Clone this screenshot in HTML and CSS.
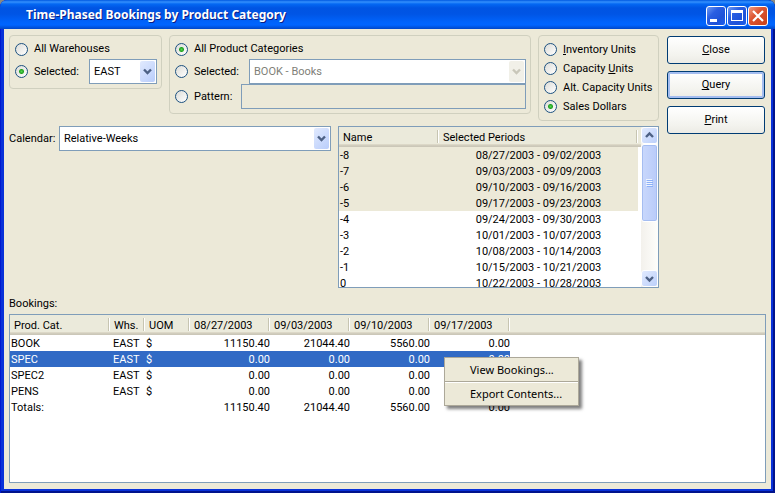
FILE: index.html
```html
<!DOCTYPE html>
<html lang="en">
<head>
<meta charset="utf-8">
<title>Time-Phased Bookings by Product Category</title>
<link rel="stylesheet" href="styles.css">
</head>
<body>
<div class="window">
  <header class="titlebar">
    <h1>Time-Phased Bookings by Product Category</h1>
    <div class="window-controls">
      <button type="button" class="control" aria-label="Minimize"><svg viewBox="0 0 18 18"><path d="M3 12h7v3H3z" fill="#fff"/></svg></button>
      <button type="button" class="control" aria-label="Maximize"><svg viewBox="0 0 18 18"><path d="M3 3h12v11H3zM4 6v7h10V6z" fill="#fff" fill-rule="evenodd"/></svg></button>
      <button type="button" class="control control-close" aria-label="Close window"><svg viewBox="0 0 18 18"><path d="M4 4l10 10M14 4L4 14" stroke="#fff" stroke-width="2.2" fill="none"/></svg></button>
    </div>
  </header>

  <main class="content">
    <div class="top">
      <div class="filters">
        <div class="groups">
          <fieldset class="group group-warehouse">
            <label class="option"><input type="radio" name="whs">All Warehouses</label>
            <div class="line">
              <label class="option option-fixed"><input type="radio" name="whs" checked>Selected:</label>
              <span class="combo"><select aria-label="Warehouse"><option>EAST</option></select><svg class="arrow" viewBox="0 0 15 21"><path d="M4 8.500l3.500 3.500L11 8.500" fill="none" stroke="#4d6185" stroke-width="2.400"/></svg></span>
            </div>
          </fieldset>
          <fieldset class="group group-category">
            <label class="option"><input type="radio" name="cat" checked>All Product Categories</label>
            <div class="line">
              <label class="option option-fixed"><input type="radio" name="cat">Selected:</label>
              <span class="combo combo-disabled"><select aria-label="Product category" disabled><option>BOOK - Books</option></select><svg class="arrow" viewBox="0 0 15 21"><path d="M4 8.500l3.500 3.500L11 8.500" fill="none" stroke="#c9c7ba" stroke-width="2.400"/></svg></span>
            </div>
            <div class="line">
              <label class="option option-pattern"><input type="radio" name="cat">Pattern:</label>
              <input class="pattern" type="text" aria-label="Pattern" disabled>
            </div>
          </fieldset>
          <fieldset class="group group-units">
            <label class="option"><input type="radio" name="unit"><span><u>I</u>nventory Units</span></label>
            <label class="option"><input type="radio" name="unit"><span>Capacity <u>U</u>nits</span></label>
            <label class="option"><input type="radio" name="unit">Alt. Capacity Units</label>
            <label class="option"><input type="radio" name="unit" checked>Sales Dollars</label>
          </fieldset>
        </div>
        <div class="calendar">
          <div class="calendar-field">
            <label for="calendar">Calendar:</label>
            <span class="combo"><select id="calendar"><option>Relative-Weeks</option></select><svg class="arrow" viewBox="0 0 15 21"><path d="M4 8.500l3.500 3.500L11 8.500" fill="none" stroke="#4d6185" stroke-width="2.400"/></svg></span>
          </div>
          <div class="list periods">
            <div class="periods-view">
              <table>
                <colgroup><col class="col-name"><col class="col-period"><col></colgroup>
                <thead><tr><th>Name</th><th>Selected Periods</th><th class="filler"></th></tr></thead>
                <tbody>
                  <tr class="picked"><td>-8</td><td>08/27/2003 - 09/02/2003</td></tr>
                  <tr class="picked"><td>-7</td><td>09/03/2003 - 09/09/2003</td></tr>
                  <tr class="picked"><td>-6</td><td>09/10/2003 - 09/16/2003</td></tr>
                  <tr class="picked"><td>-5</td><td>09/17/2003 - 09/23/2003</td></tr>
                  <tr><td>-4</td><td>09/24/2003 - 09/30/2003</td></tr>
                  <tr><td>-3</td><td>10/01/2003 - 10/07/2003</td></tr>
                  <tr><td>-2</td><td>10/08/2003 - 10/14/2003</td></tr>
                  <tr><td>-1</td><td>10/15/2003 - 10/21/2003</td></tr>
                  <tr><td>0</td><td>10/22/2003 - 10/28/2003</td></tr>
                </tbody>
              </table>
            </div>
            <div class="scrollbar">
              <button type="button" class="scroll-button" aria-label="Scroll up"><svg viewBox="0 0 15 15"><path d="M4 9l3.500-3.500L11 9" fill="none" stroke="#4d6185" stroke-width="2.400"/></svg></button>
              <div class="thumb"><svg viewBox="0 0 7 8"><path d="M0 .5h6M0 2.500h6M0 4.500h6M0 6.500h6" stroke="#eef4fe"/><path d="M1 1.500h6M1 3.500h6M1 5.500h6M1 7.500h6" stroke="#8cb0f8"/></svg></div>
              <button type="button" class="scroll-button scroll-down" aria-label="Scroll down"><svg viewBox="0 0 15 15"><path d="M4 6l3.500 3.500L11 6" fill="none" stroke="#4d6185" stroke-width="2.400"/></svg></button>
            </div>
          </div>
        </div>
      </div>
      <div class="actions">
        <button type="button" class="action"><u>C</u>lose</button>
        <button type="button" class="action action-default"><u>Q</u>uery</button>
        <button type="button" class="action"><u>P</u>rint</button>
      </div>
    </div>

    <h2>Bookings:</h2>
    <div class="list bookings">
      <table>
        <colgroup><col class="col-cat"><col class="col-whs"><col class="col-uom"><col class="col-date"><col class="col-date"><col class="col-date"><col class="col-date"><col></colgroup>
        <thead><tr><th>Prod. Cat.</th><th>Whs.</th><th>UOM</th><th>08/27/2003</th><th>09/03/2003</th><th>09/10/2003</th><th>09/17/2003</th><th class="filler"></th></tr></thead>
        <tbody>
          <tr><td>BOOK</td><td>EAST</td><td>$</td><td>11150.40</td><td>21044.40</td><td>5560.00</td><td>0.00</td></tr>
          <tr class="current"><td>SPEC</td><td>EAST</td><td>$</td><td>0.00</td><td>0.00</td><td>0.00</td><td>0.00</td></tr>
          <tr><td>SPEC2</td><td>EAST</td><td>$</td><td>0.00</td><td>0.00</td><td>0.00</td><td>0.00</td></tr>
          <tr><td>PENS</td><td>EAST</td><td>$</td><td>0.00</td><td>0.00</td><td>0.00</td><td>0.00</td></tr>
          <tr><td>Totals:</td><td></td><td></td><td>11150.40</td><td>21044.40</td><td>5560.00</td><td>0.00</td></tr>
        </tbody>
      </table>
      <div class="menu" role="menu">
        <button type="button" role="menuitem">View Bookings...</button>
        <button type="button" role="menuitem">Export Contents...</button>
      </div>
    </div>
  </main>
</div>
</body>
</html>
```
FILE: styles.css
```css
* { box-sizing: border-box; }

body {
  margin: 0;
  background: #8a8a80;
  color: #000;
  font: 11px/16px Roboto, "Liberation Sans", sans-serif;
}

button, input, select { font: inherit; color: inherit; margin: 0; }
svg { display: block; }
u { text-underline-offset: 1px; }

.window {
  display: flex;
  flex-direction: column;
  min-height: 100vh;
  background: #0831d9;
  border-radius: 7px 7px 0 0;
  overflow: hidden;
  box-shadow: inset 1px 0 #0019cf, inset -2px 0 #00138c, inset 0 -2px #00138c;
}

.titlebar {
  display: flex;
  align-items: center;
  justify-content: space-between;
  height: 29px;
  padding: 2px 7px 0 26px;
  background: linear-gradient(#0058e0, #3490fd 2px, #0468f3 4px, #0054e3 8px, #0055e5 14px, #0063fb 22px, #0065ff 25px, #0047c8 29px);
}

h1 {
  margin: 0;
  padding-bottom: 1px;
  color: #fff;
  font: bold 12px/18px "Noto Sans", sans-serif;
  text-shadow: 1px 1px #0a1e84;
  white-space: nowrap;
}

.window-controls { display: flex; gap: 1px; }

.control {
  width: 20px;
  height: 20px;
  padding: 0;
  border: 1px solid #fff;
  border-radius: 3px;
  background: linear-gradient(135deg, #6f9bf3, #2a5ee2 35%, #1f52d8 70%, #1b60f0);
}

.control-close { background: linear-gradient(135deg, #f09a82, #dd5531 40%, #c9401a); }

.content {
  flex: 1;
  display: flex;
  flex-direction: column;
  margin: 0 4px 4px;
  padding: 6px 5px;
  background: #ece9d8;
}

.top { display: flex; gap: 8px; padding-right: 1px; }
.filters { flex: 1; display: flex; flex-direction: column; gap: 5px; }
.groups { display: flex; align-items: flex-start; gap: 7px; }

.group {
  min-width: 0;
  margin: 0;
  padding: 5px 4px 4px 5px;
  border: 1px solid #d0d0bf;
  border-radius: 4px;
}

.group > .option:first-child { margin-bottom: 2px; }
.group-warehouse { flex: 0 0 153px; }
.group-category { flex: 1; }
.group-units { flex: 0 0 121px; padding: 4px 5px; }

.option { display: flex; align-items: center; gap: 6px; height: 16px; white-space: nowrap; }
.group-units .option,
.group-units .option:first-child { height: 19px; margin: 0; }
.option-fixed { flex: 0 0 74px; }
.option-pattern { flex: 0 0 66px; }
.line { display: flex; align-items: center; height: 25px; }

input[type="radio"] {
  appearance: none;
  flex: none;
  width: 13px;
  height: 13px;
  border: 1px solid #1c5180;
  border-radius: 50%;
  background: linear-gradient(135deg, #dcdcd7, #fff);
}

input[type="radio"]:checked {
  background: radial-gradient(circle, #55d551, #21a121 2px, #21a12100 3px), linear-gradient(135deg, #dcdcd7, #fff);
}

.combo {
  flex: 1;
  display: flex;
  height: 25px;
  padding: 1px;
  border: 1px solid #7f9db9;
  background: #fff;
}

.combo select {
  appearance: none;
  flex: 1;
  min-width: 0;
  padding: 0 3px;
  border: 0;
  background: none;
}

.combo .arrow {
  width: 15px;
  height: 21px;
  border-radius: 2px;
  background: linear-gradient(135deg, #e1eafe, #b9cdfb);
}

.combo-disabled select { color: #808078; opacity: 1; }
.combo-disabled .arrow { background: #f1f0e8; }

.pattern {
  flex: 1;
  min-width: 0;
  height: 25px;
  border: 1px solid #7f9db9;
  background: #ece9d8;
}

.calendar { display: flex; align-items: flex-start; gap: 7px; }
.calendar-field { flex: 1; display: flex; align-items: center; }
.calendar-field label { flex: 0 0 50px; }

.list { border: 1px solid #7f9db9; background: #fff; }
.periods { display: flex; flex: 0 0 321px; height: 162px; }
.periods-view { flex: 1; overflow: hidden; }

table { width: 100%; border-collapse: collapse; table-layout: fixed; }

th {
  height: 20px;
  padding: 1px 4px 0;
  background: linear-gradient(90deg, #c7c5b2 1px, #fff 1px) right 0 top 3px / 2px 13px no-repeat, linear-gradient(#ebeadb 17px, #e2decd 17px, #d6d2c2 18px, #cbc7b8 19px);
  font-weight: normal;
  text-align: left;
  white-space: nowrap;
}

th.filler { background: linear-gradient(#ebeadb 17px, #e2decd 17px, #d6d2c2 18px, #cbc7b8 19px); }
td { height: 16px; padding: 2px 1px 0; line-height: 14px; white-space: nowrap; }

.col-name { width: 100px; }
.col-period { width: 199px; }
.periods td:nth-child(2) { text-align: center; }
.picked td { background: #ece9d8; }

.scrollbar {
  flex: 0 0 17px;
  display: flex;
  flex-direction: column;
  background: linear-gradient(90deg, #f3f1ec, #fefefb);
}

.scroll-button, .thumb {
  width: 17px;
  padding: 0;
  border: 1px solid #fff;
  border-radius: 3px;
  background: linear-gradient(135deg, #e1eafe, #bcd0fb);
}

.scroll-button { height: 17px; }
.scroll-down { margin-top: auto; }

.thumb {
  display: flex;
  align-items: center;
  justify-content: center;
  height: 78px;
  background: linear-gradient(90deg, #c9d8fc, #b9cbf9);
  box-shadow: inset 0 0 0 1px #a5bdf1;
}

.thumb svg { width: 7px; height: 8px; }

.actions { flex: 0 0 98px; display: flex; flex-direction: column; gap: 7px; padding-top: 1px; }

.action {
  height: 28px;
  padding: 0;
  border: 1px solid #003c74;
  border-radius: 3px;
  background: linear-gradient(#fff, #f3f3ee 70%, #ecebe5);
}

.action-default { box-shadow: inset 0 0 0 2px #a4bdf0; }

h2 { margin: 8px 0 2px; font: inherit; }

.bookings { position: relative; flex: 1; }
.col-cat { width: 100px; }
.col-whs { width: 35px; }
.col-uom { width: 45px; }
.col-date { width: 80px; }
.bookings td:nth-child(2) { padding-left: 3px; }
.bookings td:nth-child(n+4) { padding: 2px 0 0; text-align: right; }
.current td { background: #316ac5; color: #fff; }

.menu {
  position: absolute;
  top: 42px;
  left: 434px;
  width: 135px;
  border: 1px solid #aca899;
  background: #ece9d8;
  box-shadow: 3px 3px 3px #00000080;
}

.menu button {
  display: block;
  width: 100%;
  height: 23px;
  padding: 0 0 0 25px;
  border: 0;
  background: none;
  font: 11px/16px "Noto Sans", sans-serif;
  text-align: left;
  white-space: nowrap;
}

.menu button + button { height: 24px; border-top: 1px solid #aca899; box-shadow: inset 0 1px #fff; }
```
